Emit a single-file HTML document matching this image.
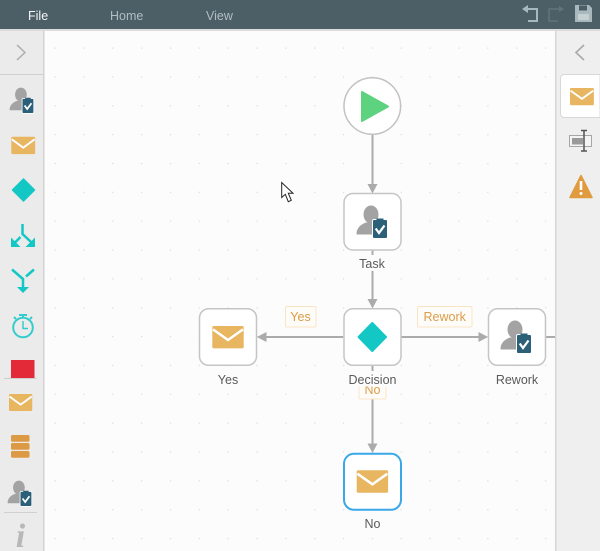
<!DOCTYPE html>
<html><head><meta charset="utf-8"><style>
html,body{margin:0;padding:0;background:#fdfcfd;width:600px;height:551px;overflow:hidden}
svg{display:block;font-family:"Liberation Sans",sans-serif;filter:blur(.3px)}
</style></head><body>
<svg width="600" height="551" viewBox="0 0 600 551" xmlns="http://www.w3.org/2000/svg">
<defs>
<pattern id="dots" x="54.5" y="47.5" width="28.85" height="28.85" patternUnits="userSpaceOnUse"><rect width="1.2" height="1.2" fill="#d9d9dc"/></pattern>
<g id="env"><rect x="0" y="0" width="31.4" height="22.4" rx="1.5" fill="#e8b560"/><path d="M0.7 3.4L15.7 14L30.7 3.4" fill="none" stroke="#fff" stroke-width="2.5"/></g>
<g id="person"><ellipse cx="14" cy="8.500" rx="7.500" ry="9" fill="#a3a3a3"/><path d="M0 28C0 22 4 19 9 17H19V28Z" fill="#a3a3a3" stroke="#a3a3a3" stroke-linejoin="round" stroke-width="1"/><rect x="15.500" y="13.500" width="15" height="19" rx="1.500" fill="#2c6079" stroke="#fff" stroke-width="1"/><rect x="19.500" y="12.500" width="7" height="3" fill="#2c6079"/><path d="M18.700 22.500L22 27L27.500 19.500" fill="none" stroke="#fff" stroke-width="2.200"/></g>
</defs>
<rect width="600" height="551" fill="#fdfcfd"/>
<rect x="44" y="31" width="512" height="520" fill="url(#dots)"/>
<rect x="0" y="30" width="44" height="521" fill="#ebebec"/>
<rect x="43" y="30" width="1.5" height="521" fill="#d2d2d3"/>
<rect x="556" y="30" width="44" height="521" fill="#efefef"/>
<rect x="555" y="30" width="1.5" height="521" fill="#d6d6d7"/>
<rect y="0" width="600" height="29" fill="#4c5f67"/>
<rect y="29" width="600" height="2" fill="#dcdcdc"/>
<text x="28" y="20" font-size="12.5" fill="#f4f6f6">File</text>
<text x="110" y="20" font-size="12.5" fill="#b2bec2">Home</text>
<text x="206" y="20" font-size="12.5" fill="#b2bec2">View</text>
<path d="M524 9H537V21H528" fill="none" stroke="#a9b8bc" stroke-width="2"/><path d="M522 9L528 5V13Z" fill="#a9b8bc"/>
<path d="M562 9H549V21H558" fill="none" stroke="#62747b" stroke-width="1.5"/><path d="M564 9L559 6V12Z" fill="#62747b"/>
<path d="M575 5H589L592 8V22H575Z" fill="#a9b8bc"/><rect x="579" y="5.5" width="8" height="5" fill="#4c5f67"/><rect x="578" y="14" width="11" height="6" fill="#c5d0d3"/>
<path d="M17 45L25 52.500L17 60" fill="none" stroke="#b3b3b3" stroke-width="1.6"/>
<rect x="0" y="74" width="43" height="1" fill="#d0d0d0"/>
<g transform="translate(10 88) scale(.78)"><use href="#person"/></g>
<g transform="translate(11.300 136.700) scale(.76 .78)"><use href="#env"/></g>
<path d="M23.500 179L34.500 190L23.500 201L12.500 190Z" fill="#13c7c4" stroke="#13c7c4" stroke-width="1.500" stroke-linejoin="round"/>
<g fill="none" stroke="#13c7c4" stroke-width="2.500"><path d="M22.500 224V234L31 242"/><path d="M20.500 237L15 242.500"/><path d="M12 269.500L23 279"/><path d="M34 269.500L26 276.500"/><path d="M23 278V288"/></g>
<path d="M11 247V237.500L20.500 247Z M35 247V237.500L25.500 247Z" fill="#13c7c4"/><path d="M17 287H29L23 293Z" fill="#13c7c4"/>
<circle cx="23" cy="327.500" r="9.800" fill="none" stroke="#35cdcb" stroke-width="2"/><path d="M23 321V328.500H28" fill="none" stroke="#35cdcb" stroke-width="1.500"/><path d="M19 315H27M23 315V318M14 317L16 319M32 317L30 319" stroke="#35cdcb" stroke-width="2"/>
<rect x="11" y="360" width="23.500" height="18" fill="#e32a38"/>
<rect x="4" y="378" width="33" height="1" fill="#cfcfcf"/>
<g transform="translate(9 394) scale(.74 .76)"><use href="#env"/></g>
<g fill="#dc9a45"><rect x="11" y="435" width="18.500" height="6.800" rx="1.500"/><rect x="11" y="443" width="18.500" height="6.800" rx="1.500"/><rect x="11" y="451" width="18.500" height="6.800" rx="1.500"/></g>
<g transform="translate(8 481) scale(.78)"><use href="#person"/></g>
<rect x="4" y="512" width="33" height="1" fill="#d0d0d0"/>
<text x="20.500" y="547" text-anchor="middle" font-size="34" font-weight="700" font-style="italic" fill="#b8b8b8" style="font-family:'Liberation Serif',serif">i</text>
<path d="M584 45L576 52.500L584 60" fill="none" stroke="#a8a8a8" stroke-width="1.600"/>
<path d="M600 74.500H564A3.500 3.500 0 0 0 560.500 78V114A3.500 3.500 0 0 0 564 117.500H600Z" fill="#fff" stroke="#d8d8d8"/>
<g transform="translate(570 88) scale(.76 .77)"><use href="#env"/></g>
<rect x="569.500" y="135.500" width="22" height="11" fill="#f4f4f4" stroke="#a6a6a6"/><rect x="572" y="138" width="11" height="6.500" fill="#9a9a9a"/>
<path d="M584 130.500V151M581 130.500H587M581 151H587" stroke="#555" stroke-width="1.500" fill="none"/>
<path d="M581 175.500L592 197.500H570Z" fill="#e09b3e" stroke="#e09b3e" stroke-width="1.500" stroke-linejoin="round"/><path d="M581 181V190" stroke="#fff" stroke-width="2.600"/><circle cx="581" cy="193.500" r="1.500" fill="#fff"/>

<g fill="none" stroke="#ababab" stroke-width="2">
<path d="M372.500 134V186"/><path d="M372.500 250V300"/><path d="M372.500 366V445"/><path d="M343 337H265"/><path d="M401 337H480"/><path d="M546 337H555"/>
</g>
<g fill="#ababab">
<path d="M367.500 184H377.500L372.500 193.500Z"/><path d="M367.500 299H377.500L372.500 308.500Z"/><path d="M367.500 443.500H377.500L372.500 453Z"/><path d="M266.500 332V342L256.800 337Z"/><path d="M478.500 332V342L488 337Z"/>
</g>
<circle cx="372.300" cy="106" r="28.300" fill="#fff" stroke="#c2c2c2" stroke-width="1.500"/>
<path d="M362 92L388 106.500L362 121Z" fill="#5dd380" stroke="#5dd380" stroke-width="2" stroke-linejoin="round"/>
<g fill="#fff" stroke="#c5c5c5" stroke-width="1.500">
<rect x="344" y="193.500" width="57" height="56.500" rx="9"/>
<rect x="344" y="308.800" width="57" height="56.500" rx="9"/>
<rect x="199.500" y="308.800" width="57" height="56.500" rx="9"/>
<rect x="488.500" y="308.800" width="57" height="56.500" rx="9"/>
</g>
<rect x="344" y="453.800" width="57" height="56" rx="10" fill="#fff" stroke="#3aa8e8" stroke-width="2"/>
<g transform="translate(357 206)"><use href="#person"/></g>
<g transform="translate(501 321)"><use href="#person"/></g>
<path d="M372.300 323L386 337L372.300 351L358.600 337Z" fill="#13c7c4" stroke="#13c7c4" stroke-width="2" stroke-linejoin="round"/>
<g transform="translate(212.300 326)"><use href="#env"/></g>
<g transform="translate(356.700 470.300)"><use href="#env"/></g>

<rect x="285.500" y="306.500" width="30.500" height="20.500" rx="1.500" fill="#fefcf8" stroke="#fae4c6"/>
<text x="300.500" y="321" text-anchor="middle" font-size="12.500" fill="#dc9c48">Yes</text>
<rect x="417.500" y="306.500" width="54.500" height="20.500" rx="1.500" fill="#fefcf8" stroke="#fae4c6"/>
<text x="444.700" y="321" text-anchor="middle" font-size="12.500" fill="#dc9c48">Rework</text>
<rect x="359" y="379" width="27" height="20" rx="1.500" fill="#fefcf8" stroke="#fae4c6"/>
<text x="372.500" y="394" text-anchor="middle" font-size="12.500" fill="#dc9c48">No</text>
<rect x="358" y="255" width="29" height="16" fill="#fdfcfd"/>
<rect x="346" y="371" width="53" height="15.500" fill="#fdfcfd"/>
<g font-size="12.500" fill="#5a5a5a" text-anchor="middle">
<text x="372" y="268">Task</text>
<text x="228" y="384">Yes</text>
<text x="372.500" y="384">Decision</text>
<text x="517" y="384">Rework</text>
<text x="372.500" y="528">No</text>
</g>
<path d="M281.700 182.500V197.500L285.300 194.300L288.300 201.700L291.300 200.300L288.300 193.300H293Z" fill="#fff" stroke="#222" stroke-width="1"/>
</svg>
</body></html>
